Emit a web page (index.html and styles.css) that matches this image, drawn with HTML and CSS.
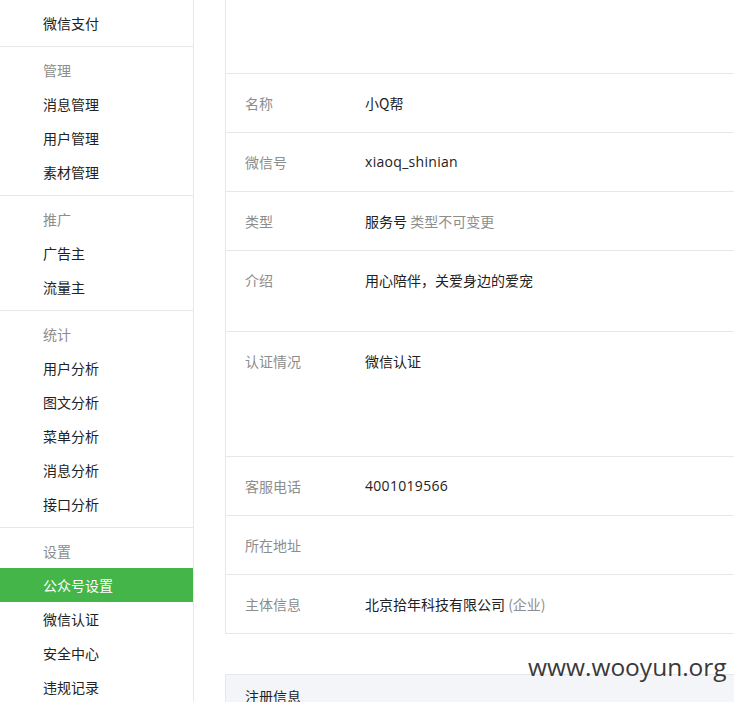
FILE: index.html
```html
<!DOCTYPE html>
<html lang="zh-CN">
<head>
<meta charset="utf-8">
<title>公众号设置</title>
<link rel="stylesheet" href="styles.css">
</head>
<body>
<div class="page">
  <nav class="sidebar">
    <div class="section first">
      <div class="item">微信支付</div>
    </div>
    <div class="section">
      <div class="title">管理</div>
      <div class="item">消息管理</div>
      <div class="item">用户管理</div>
      <div class="item">素材管理</div>
    </div>
    <div class="section">
      <div class="title">推广</div>
      <div class="item">广告主</div>
      <div class="item">流量主</div>
    </div>
    <div class="section">
      <div class="title">统计</div>
      <div class="item">用户分析</div>
      <div class="item">图文分析</div>
      <div class="item">菜单分析</div>
      <div class="item">消息分析</div>
      <div class="item">接口分析</div>
    </div>
    <div class="section">
      <div class="title">设置</div>
      <div class="item active">公众号设置</div>
      <div class="item">微信认证</div>
      <div class="item">安全中心</div>
      <div class="item">违规记录</div>
    </div>
  </nav>
  <main class="main">
    <div class="infobox">
      <div class="head"></div>
      <div class="row"><div class="label">名称</div><div class="value">小Q帮</div></div>
      <div class="row"><div class="label">微信号</div><div class="value latin">xiaoq_shinian</div></div>
      <div class="row"><div class="label">类型</div><div class="value">服务号 <span class="muted">类型不可变更</span></div></div>
      <div class="row intro"><div class="label">介绍</div><div class="value">用心陪伴，关爱身边的爱宠</div></div>
      <div class="row verify"><div class="label">认证情况</div><div class="value">微信认证</div></div>
      <div class="row"><div class="label">客服电话</div><div class="value latin">4001019566</div></div>
      <div class="row"><div class="label">所在地址</div><div class="value"></div></div>
      <div class="row"><div class="label">主体信息</div><div class="value">北京拾年科技有限公司 <span class="muted">(企业)</span></div></div>
    </div>
    <div class="regbox">
      <div class="regtitle">注册信息</div>
    </div>
  </main>
</div>
<div class="watermark">www.wooyun.org</div>
</body>
</html>
```

FILE: styles.css
```css
html, body {
  margin: 0;
  padding: 0;
  overflow: hidden;
  height: 702px;
  background: #fff;
}
body {
  font-family: "Noto Sans CJK SC", "Noto Sans", sans-serif;
  font-size: 14px;
  color: #353535;
}
.page {
  display: flex;
  align-items: flex-start;
}
.sidebar {
  flex: none;
  width: 193px;
  border-right: 1px solid #e7e7eb;
  min-height: 720px;
}
.section {
  padding: 6px 0;
  border-top: 1px solid #e7e7eb;
}
.section.first {
  border-top: none;
}
.title, .item {
  height: 34px;
  line-height: 34px;
  padding-left: 43px;
}
.title {
  color: #8d8d8d;
}
.item {
  color: #222;
}
.item.active {
  background: #44b549;
  color: #fff;
}
.main {
  flex: none;
  width: 900px;
  padding-left: 31px;
}
.infobox {
  border: 1px solid #e7e7eb;
  border-top: none;
}
.head {
  height: 73px;
  border-bottom: 1px solid #e7e7eb;
}
.row {
  display: flex;
  box-sizing: border-box;
  padding: 18px 19px;
  line-height: 22px;
  border-bottom: 1px solid #e7e7eb;
  height: 59px;
}
.row:last-child {
  border-bottom: none;
  height: 58px;
}
.row.intro {
  height: 81px;
}
.row.verify {
  height: 125px;
}
.label {
  width: 120px;
  flex: none;
  color: #8d8d8d;
}
.value {
  color: #222;
}
.latin {
  font-family: "Open Sans", "Noto Sans CJK SC", sans-serif;
  font-size: 14px;
  letter-spacing: 0.3px;
}
.muted {
  color: #8d8d8d;
}
.regbox {
  margin-top: 40px;
  border: 1px solid #e7e7eb;
  background: #f4f5f9;
  padding: 10px 19px;
  height: 60px;
}
.regtitle {
  line-height: 22px;
  color: #222;
}
.watermark {
  position: absolute;
  left: 528px;
  top: 655px;
  font-family: "Open Sans", "Noto Sans", sans-serif;
  font-size: 24.5px;
  line-height: 24px;
  color: #3a3a3a;
}
```
